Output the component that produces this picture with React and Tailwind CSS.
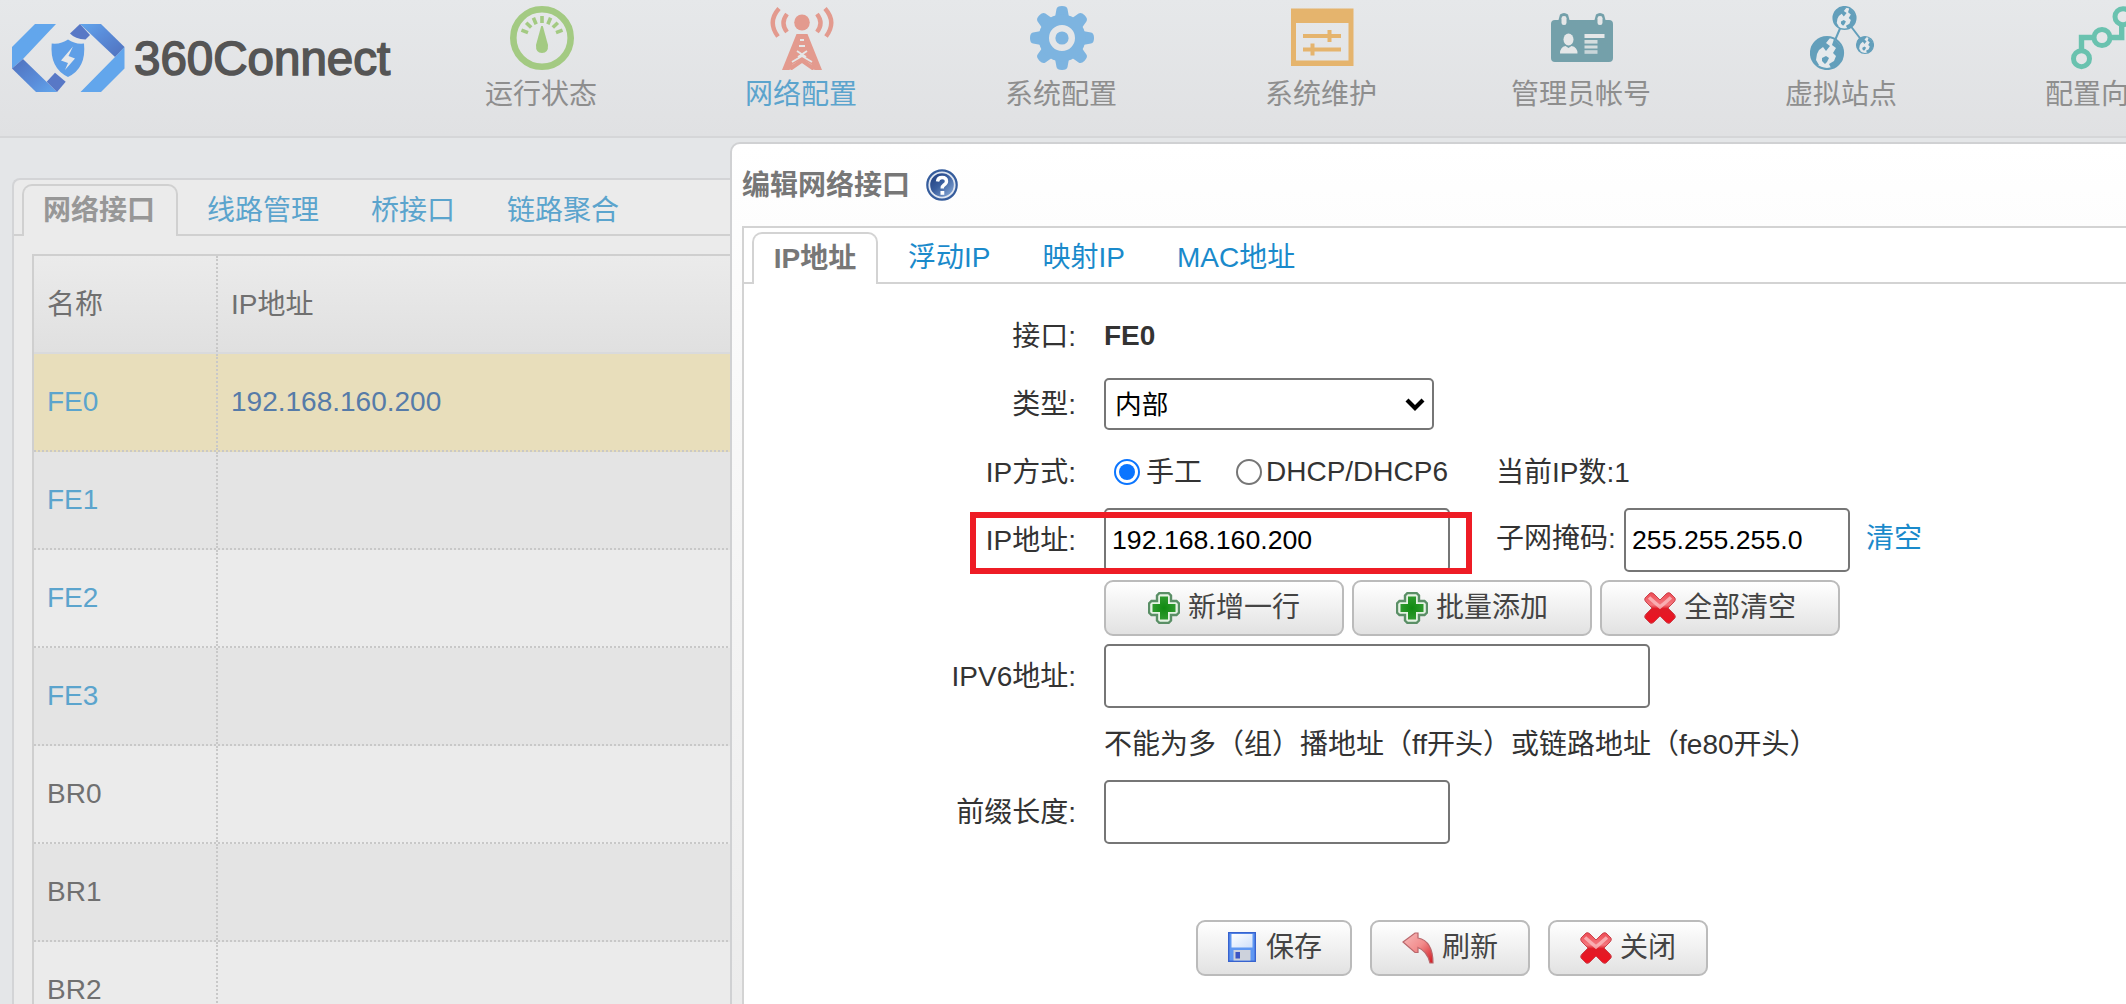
const Logo = () => (
  <div className="flex h-[136px] w-[412px] shrink-0 items-start gap-[9px] pl-[12px] pt-[24px]">
    <svg width="113" height="68" viewBox="0 0 113 68">
      <defs>
        <linearGradient id="lg1" x1="0" y1="0" x2="1" y2="1">
          <stop offset="0" stopColor="#62a6ec" />
          <stop offset=".4" stopColor="#5a8dda" />
          <stop offset="1" stopColor="#5071bd" />
        </linearGradient>
        <linearGradient id="lg2" x1="0" y1="0" x2="1" y2="1">
          <stop offset="0" stopColor="#5071bd" />
          <stop offset=".6" stopColor="#5a8dda" />
          <stop offset="1" stopColor="#62a6ec" />
        </linearGradient>
      </defs>
      <path d="M23 0H44L11 35L0 44.500V23Z" fill="#62a6ec" />
      <path d="M0 44.500L11 35L45 68H24Z" fill="url(#lg2)" />
      <path d="M34.700 57.700L43 48.700L53.700 57.700L45 68Z" fill="#5878c6" />
      <path d="M89 68H68.500L103 33L112.500 23V44.500Z" fill="#62a6ec" />
      <path d="M68 0H89L112.500 23L103 33Z" fill="url(#lg1)" />
      <path d="M58 9.500L68 0L78 11L73.500 15.500Q63 15 58 9.500Z" fill="#5878c6" />
      <path d="M56 15.500Q63 20.500 72 19.500Q74.500 44 56 53Q37.500 44 39.700 19.500Q49 20.500 56 15.500Z" fill="#5f9fe7" />
      <path d="M61 22.500L49 36.500L56 39L53 46L63 34.500L56.500 32Z" fill="#e6e8ea" />
    </svg>
    <span className="whitespace-nowrap pt-[12px] text-[47.5px] leading-[46px] text-[#555] [-webkit-text-stroke:1.6px_#555]">360Connect</span>
  </div>
);

const GaugeIcon = () => (
  <svg width="64" height="64" viewBox="0 0 64 64" stroke="#a3ca82" fill="none">
    <circle cx="32" cy="32" r="28.700" strokeWidth="6.600" />
    <g strokeWidth="3.600">
      {[-75, -50, -25, 0, 25, 50, 75].map((a) => (
        <line key={a} x1="32" y1="10" x2="32" y2="17" transform={`rotate(${a * 0.92} 32 32)`} />
      ))}
    </g>
    <path d="M31.200 20L26 39Q25.500 47 32 47Q38.500 47 38 39L32.800 20Z" fill="#a3ca82" stroke="none" />
  </svg>
);

const TowerIcon = () => (
  <svg width="64" height="64" viewBox="0 0 64 64" stroke="#e39a8e" fill="none">
    <ellipse cx="32" cy="16.500" rx="7.800" ry="8" fill="#e39a8e" stroke="none" />
    <g strokeWidth="4.400">
      <path d="M17 8Q10 17 17 26M47 8Q54 17 47 26" />
      <path d="M9 2.500Q-3 16 8 30.500M55 2.500Q67 16 56 30.500" />
    </g>
    <path d="M26.500 28H37.500L52 64H44.500L41 58L32 53L23 58L19.500 64H12Z" fill="#e39a8e" stroke="none" />
    <g stroke="#e5e7e8" strokeWidth="1.900">
      <path d="M30 34H34M29 40H35M27 45L36 51M37 45L28 51M22 56L32 50L42 56" />
    </g>
    <path d="M20 63L32 54.500L44 63" strokeWidth="4" />
  </svg>
);

const GearIcon = () => (
  <svg width="64" height="64" viewBox="0 0 64 64" fill="#7db4e0">
    {[0, 45, 90, 135, 180, 225, 270, 315].map((a) => (
      <path key={a} d="M24.500 14L26.500 3Q27 0 32 0Q37 0 37.500 3L39.500 14Z" transform={`rotate(${a} 32 32)`} />
    ))}
    <path fillRule="evenodd" d="M32 8.500a23.500 23.500 0 1 0 0 47a23.500 23.500 0 1 0 0-47ZM32 19a13 13 0 1 1 0 26a13 13 0 1 1 0-26Z" />
    <circle cx="32" cy="32" r="6.600" />
  </svg>
);

const PanelIcon = () => (
  <svg width="64" height="64" viewBox="0 0 64 64">
    <path fillRule="evenodd" fill="#e5b46d" d="M1 2.500H63.500V60H1ZM6 17V54.500H58.500V17Z" />
    <path stroke="#e5b46d" strokeWidth="4" fill="none" d="M13 30H51M13 43.500H51M39.500 24V36M22.500 37.500V49.500" />
  </svg>
);

const BadgeIcon = () => (
  <svg width="64" height="64" viewBox="0 0 64 64">
    <path fill="#74a0aa" d="M5 14H8.500L10 8.500Q14 5.500 18 8.500L19.500 14H44.500L46 8.500Q50 5.500 54 8.500L55.500 14H59Q63 14 63 18V52Q63 56 59 56H5Q1 56 1 52V18Q1 14 5 14Z" />
    <g fill="#e5e7e8">
      <rect x="11.500" y="10" width="5" height="9" rx="2.300" />
      <rect x="47.500" y="10" width="5" height="9" rx="2.300" />
      <ellipse cx="18.500" cy="33.500" rx="5" ry="6" />
      <path d="M10 47.500Q10 41 15.500 40L18.500 42L21.500 40Q27.500 41 27.500 47.500Z" />
      <rect x="34.500" y="28" width="20" height="4" />
      <rect x="34.500" y="34" width="13" height="3.600" opacity=".85" />
      <rect x="34.500" y="39.500" width="13" height="3" opacity=".85" />
      <rect x="34.500" y="44.200" width="13" height="3.600" opacity=".75" />
    </g>
  </svg>
);

const Globe = ({ cx, cy, r }) => (
  <g transform={`translate(${cx} ${cy}) scale(${r / 17})`}>
    <circle r="16" fill="#e5e9ec" stroke="#639fbb" strokeWidth="2.200" />
    <path fill="#639fbb" d="M-16 -2Q-14 -14 -2 -16L3 -15L-1 -10L3 -7L-1 -2L-4 -6L-8 -3L-10 1L-11 7L-8 12L-11 12Q-17 5 -16 -2ZM7 -14Q15 -8 16 0Q15 9 9 13L4 15L2 11L7 8L9 3L6 0L9 -5L5 -8ZM-5 5L-1 3L2 5L0 9L-2 11L-5 8Z" />
  </g>
);

const GlobesIcon = () => (
  <svg width="64" height="64" viewBox="0 0 64 64">
    <path stroke="#639fbb" strokeWidth="2" d="M34.500 12L20 46M34.500 12L56 40" />
    <Globe cx={34.5} cy={12} r={12} />
    <Globe cx={17} cy={47} r={17} />
    <Globe cx={55} cy={39} r={9} />
  </svg>
);

const StepsIcon = () => (
  <svg width="64" height="64" viewBox="0 0 64 64" stroke="#6ac2af" fill="none">
    <path strokeWidth="5.400" d="M11.500 45V31.500H24M40 31.500H51.700V18" />
    <g strokeWidth="5">
      <circle cx="11.500" cy="52.700" r="8" />
      <circle cx="32" cy="31.500" r="8" />
      <circle cx="53" cy="10.700" r="8" />
    </g>
  </svg>
);

const NAV = [
  ["运行状态", GaugeIcon],
  ["网络配置", TowerIcon],
  ["系统配置", GearIcon],
  ["系统维护", PanelIcon],
  ["管理员帐号", BadgeIcon],
  ["虚拟站点", GlobesIcon],
  ["配置向导", StepsIcon],
];

const HelpIcon = () => (
  <svg width="32" height="32" viewBox="0 0 32 32">
    <defs>
      <linearGradient id="help" x1="0" y1="0" x2="1" y2="1">
        <stop offset="0" stopColor="#1c3a7a" />
        <stop offset=".45" stopColor="#3a5f9f" />
        <stop offset="1" stopColor="#8fb0dc" />
      </linearGradient>
    </defs>
    <circle cx="16" cy="16" r="14.700" fill="#dfe6f1" stroke="#355c9c" strokeWidth="2.200" />
    <circle cx="16" cy="16" r="11.800" fill="url(#help)" />
    <path d="M11.500 12.500Q12 8.500 16 8.500Q20.500 8.500 20.500 12.300Q20.500 14.500 18 16Q16.200 17.200 16.200 19.500" stroke="#fff" strokeWidth="3.400" fill="none" />
    <rect x="14.500" y="22" width="3.800" height="3.800" fill="#fff" />
  </svg>
);

const PlusIcon = () => (
  <svg width="32" height="32" viewBox="0 0 32 32">
    <defs>
      <radialGradient id="plus">
        <stop offset="0" stopColor="#0f8a10" />
        <stop offset="1" stopColor="#2f9a2f" />
      </radialGradient>
    </defs>
    <path d="M11.500 1H20.500L23 3.500V9H28.500L31 11.500V20.500L28.500 23H23V28.500L20.500 31H11.500L9 28.500V23H3.500L1 20.500V11.500L3.500 9H9V3.500Z" fill="#e6f3e4" stroke="#5a8f66" strokeWidth="2.400" />
    <path d="M12 4.500H20V12H27.500V20H20V27.500H12V20H4.500V12H12Z" fill="url(#plus)" />
  </svg>
);

const CrossIcon = () => (
  <svg width="32" height="32" viewBox="0 0 32 32">
    <defs>
      <linearGradient id="cross" x1="0" y1="0" x2="0" y2="1">
        <stop offset="0" stopColor="#ee4a53" />
        <stop offset=".4" stopColor="#f4787e" />
        <stop offset=".52" stopColor="#df1c27" />
        <stop offset="1" stopColor="#ee1220" />
      </linearGradient>
    </defs>
    <path d="M6 1Q8 0 10 2L16 8L22 2Q24 0 26 1L31 6Q32 8 30 10L24 16L30 22Q32 24 31 26L26 31Q24 32 22 30L16 24L10 30Q8 32 6 31L1 26Q0 24 2 22L8 16L2 10Q0 8 1 6Z" fill="url(#cross)" stroke="#c9434c" strokeWidth="1" />
    <path d="M5 5.500L16 15L27 5.500" stroke="#fbc3c5" strokeWidth="3.500" fill="none" opacity=".75" />
  </svg>
);

const SaveIcon = () => (
  <svg width="32" height="32" viewBox="0 0 32 32">
    <defs>
      <linearGradient id="disk" x1="0" y1="0" x2="1" y2="1">
        <stop offset="0" stopColor="#fff" />
        <stop offset="1" stopColor="#cfe0fb" />
      </linearGradient>
    </defs>
    <rect x="2.700" y="0.700" width="26.600" height="28.600" fill="#5f97f2" stroke="#3763cf" strokeWidth="1.400" />
    <rect x="5.500" y="2" width="21" height="13.500" fill="url(#disk)" />
    <rect x="7.500" y="18" width="17" height="10.500" fill="#cdd2dc" />
    <rect x="9.500" y="20" width="4.500" height="6.500" fill="#3b55c4" />
  </svg>
);

const BackIcon = () => (
  <svg width="32" height="32" viewBox="0 0 32 32">
    <defs>
      <linearGradient id="back" x1="0" y1="0" x2="1" y2="1">
        <stop offset="0" stopColor="#f6bcbc" />
        <stop offset=".5" stopColor="#f28c8c" />
        <stop offset="1" stopColor="#d0181f" />
      </linearGradient>
    </defs>
    <path d="M1 10L13 1L16 1V6Q31 9 31 31H28Q25 19 16 15.500V20.500H13Z" fill="url(#back)" stroke="#b9676c" strokeWidth="1.200" />
  </svg>
);

const Btn = ({ icon: Icon, className, children }) => (
  <button className={"flex h-[56px] shrink-0 items-center justify-center gap-[8px] rounded-[9px] border-2 border-[#bbb] bg-linear-to-b from-white to-[#e2e2e2] text-[28px] leading-none text-[#444] " + className}>
    <Icon />
    <span>{children}</span>
  </button>
);

const Row = ({ label, children }) => (
  <div className="flex h-[68px] items-center">
    <div className="w-[332px] shrink-0 pt-[1px] text-right">{label}</div>
    <div className="ml-[28px] flex items-center">{children}</div>
  </div>
);

const Field = ({ className, value }) => (
  <div className={"flex h-[64px] items-center rounded-[5px] border-2 border-[#767676] bg-white pl-[6px] text-[26.67px] text-black " + className}>{value}</div>
);

const ROWS = [
  ["FE0", "192.168.160.200"],
  ["FE1", ""],
  ["FE2", ""],
  ["FE3", ""],
  ["BR0", ""],
  ["BR1", ""],
  ["BR2", ""],
];

function Backdrop() {
  return (
    <div className="flex h-full w-[2240px] flex-col">
      <header className="flex h-[138px] shrink-0 border-b-2 border-[#d5d6d8] bg-linear-to-b from-[#e6e8ea] to-[#e0e1e3]">
        <Logo />
        <nav className="flex">
          {NAV.map(([label, Icon], i) => (
            <div key={label} className={"flex w-[260px] flex-col items-center pt-[6px] " + (i === 1 ? "text-[#5ba4cd]" : "text-[#8e8e8e]")}>
              <Icon />
              <span className="mt-[4px] pr-[2px] text-[28px] leading-[42px]">{label}</span>
            </div>
          ))}
        </nav>
      </header>
      <div className="flex min-h-0 grow bg-[#e4e6e8] pl-[12px] pt-[40px]">
        <div className="flex grow flex-col rounded-tl-[8px] border-l-2 border-t-2 border-[#d3d4d6] bg-[#ebebeb]">
          <div className="flex h-[56px] shrink-0 items-end text-[28px] text-[#5ba4cd]">
            <div className="h-full w-[8px] border-b-2 border-[#d0d0d0]" />
            <div className="flex h-[52px] w-[156px] items-center justify-center rounded-t-[10px] border-2 border-b-0 border-[#d0d0d0] pr-[2px] font-bold text-[#979797]">网络接口</div>
            <div className="flex h-full grow items-center gap-[52px] border-b-2 border-[#d0d0d0] pl-[29px] pt-[7px]">
              <span>线路管理</span>
              <span>桥接口</span>
              <span>链路聚合</span>
            </div>
          </div>
          <div className="ml-[18px] mt-[18px] flex grow flex-col border-l-2 border-t-2 border-[#cfcfcf] text-[28px] text-[#707070]">
            <div className="flex h-[98px] shrink-0 border-b-2 border-[#d9dadc] bg-linear-to-b from-[#ebebeb] to-[#e0e0e0]">
              <div className="flex w-[184px] items-center border-r-2 border-dotted border-[#c8c8c8] pl-[13px] pt-[2px]">名称</div>
              <div className="flex items-center pl-[13px] pt-[2px]">IP地址</div>
            </div>
            {ROWS.map(([name, ip], i) => (
              <div key={name} className={"flex h-[98px] shrink-0 border-b-2 border-dotted border-[#c8c8c8] " + (i === 0 ? "bg-[#e8debb]" : i % 2 ? "bg-[#e4e4e4]" : "bg-[#ebebeb]")}>
                <div className={"flex w-[184px] items-center border-r-2 border-dotted border-[#c8c8c8] pl-[13px] " + (i < 4 ? "text-[#5ba4cd]" : "")}>{name}</div>
                <div className="flex items-center pl-[13px] text-[#567ba8]">{ip}</div>
              </div>
            ))}
          </div>
        </div>
      </div>
    </div>
  );
}

function Dialog() {
  return (
    <section className="absolute left-[730px] top-[142px] flex h-[900px] w-[1500px] flex-col rounded-tl-[10px] border-2 border-[#d0d1d3] bg-linear-to-b from-white to-[#ebebeb] pl-[10px]">
      <div className="flex h-[82px] shrink-0 items-center gap-[16px] pb-[1px] text-[28px] font-bold text-[#777]">
        <span className="pt-[2px]">编辑网络接口</span>
        <HelpIcon />
      </div>
      <div className="flex grow flex-col border-l-2 border-t-2 border-[#d3d3d3] bg-white text-[28px] text-[#333]">
        <div className="flex h-[56px] shrink-0 items-end text-[#1a8acb]">
          <div className="h-full w-[8px] border-b-2 border-[#d3d3d3]" />
          <div className="flex h-[52px] w-[126px] items-center justify-center rounded-t-[10px] border-2 border-b-0 border-[#d3d3d3] font-bold text-[#777]">IP地址</div>
          <div className="flex h-full grow items-center gap-[52px] border-b-2 border-[#d3d3d3] pl-[30px] pt-[6px]">
            <span>浮动IP</span>
            <span>映射IP</span>
            <span>MAC地址</span>
          </div>
        </div>
        <div className="mt-[18px] flex flex-col">
          <Row label="接口:"><b>FE0</b></Row>
          <Row label="类型:">
            <div className="flex h-[52px] w-[330px] items-center justify-between rounded-[5px] border-2 border-[#767676] pl-[9px] pr-[7px] text-[26.67px] text-black">
              <span className="pt-[1px]">内部</span>
              <svg width="20" height="14" viewBox="0 0 20 14"><path d="M2 3L10 11L18 3" stroke="#000" strokeWidth="4.200" fill="none" /></svg>
            </div>
          </Row>
          <Row label="IP方式:">
            <span className="ml-[10px] flex h-[26px] w-[26px] items-center justify-center rounded-full border-2 border-[#0b75ff]"><i className="h-[16px] w-[16px] rounded-full bg-[#0b75ff]" /></span>
            <span className="ml-[6px] w-[90px] pt-[1px]">手工</span>
            <span className="h-[26px] w-[26px] rounded-full border-2 border-[#767676]" />
            <span className="ml-[4px] w-[230px]">DHCP/DHCP6</span>
            <span className="pt-[1px]">当前IP数:1</span>
          </Row>
          <Row label="IP地址:">
            <Field className="w-[346px]" value="192.168.160.200" />
            <span className="mb-[3px] ml-[46px] w-[128px]">子网掩码:</span>
            <Field className="w-[226px]" value="255.255.255.0" />
            <span className="mb-[3px] ml-[16px] text-[#1a8acb]">清空</span>
          </Row>
          <Row label="">
            <div className="flex gap-[8px]">
              <Btn icon={PlusIcon} className="w-[240px]">新增一行</Btn>
              <Btn icon={PlusIcon} className="w-[240px]">批量添加</Btn>
              <Btn icon={CrossIcon} className="w-[240px]">全部清空</Btn>
            </div>
          </Row>
          <Row label="IPV6地址:"><Field className="w-[546px]" /></Row>
          <Row label=""><span className="pt-[1px]">不能为多（组）播地址（ff开头）或链路地址（fe80开头）</span></Row>
          <Row label="前缀长度:"><Field className="w-[346px]" /></Row>
        </div>
        <div className="ml-[452px] mt-[74px] flex gap-[18px]">
          <Btn icon={SaveIcon} className="w-[156px]">保存</Btn>
          <Btn icon={BackIcon} className="w-[160px]">刷新</Btn>
          <Btn icon={CrossIcon} className="w-[160px]">关闭</Btn>
        </div>
      </div>
    </section>
  );
}

export default function App() {
  return (
    <div className="relative h-[1004px] w-[2126px] overflow-hidden bg-[#e4e6e8] font-['Liberation_Sans','Noto_Sans_CJK_SC',sans-serif]">
      <Backdrop />
      <Dialog />
      <div className="absolute left-[970px] top-[512px] h-[62px] w-[502px] border-[6px] border-[#ee1c25]" />
    </div>
  );
}
